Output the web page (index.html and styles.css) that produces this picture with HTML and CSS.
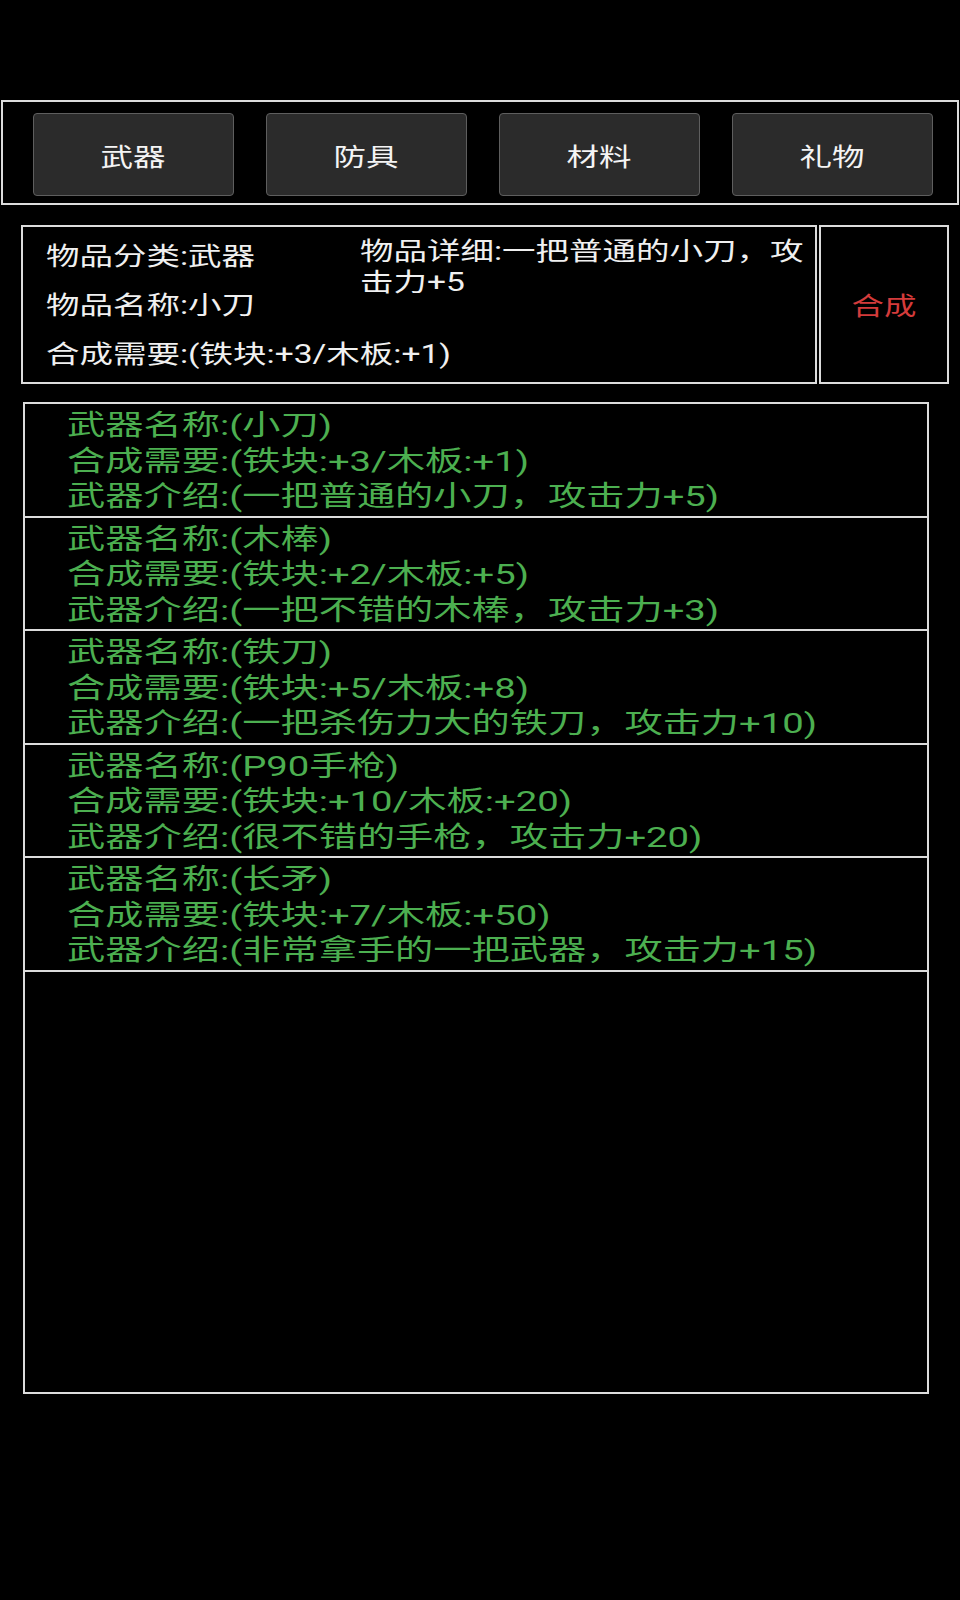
FILE: index.html
```html
<!DOCTYPE html>
<html lang="zh-CN">
<head>
<meta charset="utf-8">
<title>合成</title>
<link rel="stylesheet" href="styles.css">
</head>
<body>
<div class="tabs">
  <div class="tab"><span class="sx mid">武器</span></div>
  <div class="tab"><span class="sx mid">防具</span></div>
  <div class="tab"><span class="sx mid">材料</span></div>
  <div class="tab"><span class="sx mid">礼物</span></div>
</div>

<div class="info">
  <div class="info-main">
    <div class="info-left">
      <div><span class="sx">物品分类:武器</span></div>
      <div><span class="sx">物品名称:小刀</span></div>
      <div><span class="sx">合成需要:(铁块:+3/木板:+1)</span></div>
    </div>
    <div class="info-detail"><span class="sx detail">物品详细:一把普通的小刀，攻击力+5</span></div>
  </div>
  <div class="synth"><span class="sx mid">合成</span></div>
</div>

<div class="list">
  <div class="item">
    <div><span class="sx big">武器名称:(小刀)</span></div>
    <div><span class="sx big">合成需要:(铁块:+3/木板:+1)</span></div>
    <div><span class="sx big">武器介绍:(一把普通的小刀，攻击力+5)</span></div>
  </div>
  <div class="item">
    <div><span class="sx big">武器名称:(木棒)</span></div>
    <div><span class="sx big">合成需要:(铁块:+2/木板:+5)</span></div>
    <div><span class="sx big">武器介绍:(一把不错的木棒，攻击力+3)</span></div>
  </div>
  <div class="item">
    <div><span class="sx big">武器名称:(铁刀)</span></div>
    <div><span class="sx big">合成需要:(铁块:+5/木板:+8)</span></div>
    <div><span class="sx big">武器介绍:(一把杀伤力大的铁刀，攻击力+10)</span></div>
  </div>
  <div class="item">
    <div><span class="sx big">武器名称:(P90手枪)</span></div>
    <div><span class="sx big">合成需要:(铁块:+10/木板:+20)</span></div>
    <div><span class="sx big">武器介绍:(很不错的手枪，攻击力+20)</span></div>
  </div>
  <div class="item">
    <div><span class="sx big">武器名称:(长矛)</span></div>
    <div><span class="sx big">合成需要:(铁块:+7/木板:+50)</span></div>
    <div><span class="sx big">武器介绍:(非常拿手的一把武器，攻击力+15)</span></div>
  </div>
</div>
</body>
</html>
```

FILE: styles.css
```css
html, body {
  margin: 0;
  padding: 0;
  background: #000;
}

body {
  font-family: Roboto, "Noto Sans CJK SC", sans-serif;
  color: #f0f0f0;
  width: 960px;
  height: 1600px;
}

.sx {
  display: inline-block;
  white-space: nowrap;
  transform: scaleX(1.34);
  transform-origin: 0 50%;
}

.sx.mid {
  transform: scaleX(1.3);
  transform-origin: 50% 50%;
}

.sx.big {
  transform: scaleX(1.365);
}

/* top tab bar */
.tabs {
  box-sizing: border-box;
  margin: 100px 0 0 1px;
  width: 958px;
  height: 105px;
  border: 2px solid #dcdcdc;
  padding: 11px 0 0 30px;
  display: grid;
  grid-template-columns: repeat(4, 201px);
  column-gap: 32px;
  align-content: start;
}

.tab {
  box-sizing: border-box;
  height: 83px;
  background: #2b2b2b;
  border: 1px solid #5e5e5e;
  border-radius: 4px;
  display: flex;
  align-items: center;
  justify-content: center;
  color: #f4f4f4;
  font-size: 25px;
  padding-top: 1px;
}

/* info row */
.info {
  display: flex;
  margin: 20px 0 0 21px;
}

.info-main {
  box-sizing: border-box;
  width: 796px;
  height: 159px;
  border: 2px solid #dcdcdc;
  display: flex;
  padding-left: 23px;
  font-size: 25px;
  color: #f0f0f0;
}

.info-left {
  width: 314px;
  padding-top: 5px;
  line-height: 49px;
}

.info-detail {
  padding-top: 9px;
  line-height: 31px;
}

.sx.detail {
  white-space: normal;
  width: 336px;
}

.synth {
  box-sizing: border-box;
  width: 130px;
  height: 159px;
  margin-left: 2px;
  border: 2px solid #dcdcdc;
  display: flex;
  align-items: center;
  justify-content: center;
  padding-bottom: 1px;
  color: #d43b3b;
  font-size: 25px;
}

/* weapon list */
.list {
  box-sizing: border-box;
  margin: 18px 0 0 23px;
  width: 906px;
  height: 992px;
  border: 2px solid #dcdcdc;
}

.item {
  box-sizing: border-box;
  height: 113.5px;
  border-bottom: 2px solid #dcdcdc;
  padding: 4px 0 0 42px;
  font-size: 28px;
  line-height: 35.5px;
  color: #4caf50;
}
```
